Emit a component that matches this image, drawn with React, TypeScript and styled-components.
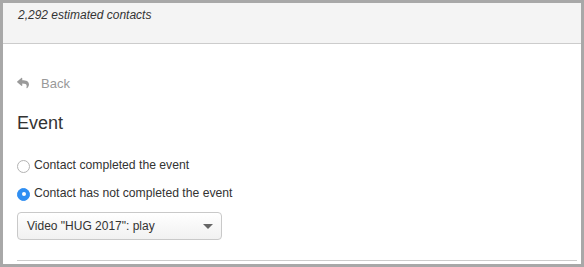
import styled, { createGlobalStyle } from "styled-components";
import { FaReply } from "react-icons/fa";

const GlobalStyle = createGlobalStyle`
  html, body {
    margin: 0;
    padding: 0;
    background: #fff;
  }
  body {
    font-family: "Liberation Sans", Arial, sans-serif;
    color: #333;
  }
`;

const Frame = styled.div`
  width: 584px;
  height: 267px;
  box-sizing: border-box;
  border: 3px solid #a8a8a8;
  background: #fff;
  overflow: hidden;
`;

const Header = styled.div`
  height: 41px;
  box-sizing: border-box;
  padding: 4px 15px 0;
  background: #f4f4f4;
  border-bottom: 1px solid #cccccc;
  font-size: 12px;
  line-height: 16px;
  font-style: italic;
  color: #333;
`;

const Body = styled.div`
  padding: 31px 4px 0 14px;
  display: flex;
  flex-direction: column;
`;

const BackLink = styled.a`
  display: flex;
  align-items: center;
  gap: 12px;
  height: 18px;
  font-size: 13px;
  line-height: 18px;
  color: #999;
  text-decoration: none;
  cursor: pointer;

  svg {
    margin-top: -3px;
  }
`;

const Title = styled.h2`
  margin: 19px 0 0;
  font-size: 18px;
  line-height: 22px;
  font-weight: normal;
  color: #333;
`;

const Options = styled.div`
  margin-top: 22px;
  display: flex;
  flex-direction: column;
  gap: 10px;
`;

const Option = styled.label`
  display: flex;
  align-items: center;
  gap: 4px;
  font-size: 12.2px;
  line-height: 18px;
  color: #333;
  cursor: pointer;
`;

const Radio = styled.span<{ $checked?: boolean }>`
  width: 13px;
  height: 13px;
  margin-top: 2px;
  box-sizing: border-box;
  border-radius: 50%;
  border: 1px solid ${(p) => (p.$checked ? "#2f8ef2" : "#b3b3b3")};
  background: ${(p) => (p.$checked ? "#2f8ef2" : "#fff")};
  display: flex;
  align-items: center;
  justify-content: center;

  &::after {
    content: "";
    display: ${(p) => (p.$checked ? "block" : "none")};
    width: 4px;
    height: 4px;
    border-radius: 50%;
    background: #fff;
  }
`;

const Select = styled.div`
  margin-top: 10px;
  width: 205px;
  height: 28px;
  box-sizing: border-box;
  padding: 0 8px 0 9px;
  display: flex;
  align-items: center;
  justify-content: space-between;
  border: 1px solid #c9c9c9;
  border-radius: 4px;
  background: linear-gradient(#ffffff, #f1f1f1);
  font-size: 12px;
  color: #333;
`;

const Caret = styled.span`
  width: 0;
  height: 0;
  border-left: 5px solid transparent;
  border-right: 5px solid transparent;
  border-top: 5px solid #666;
`;

const Divider = styled.div`
  margin-top: 20px;
  height: 1px;
  background: #cccccc;
`;

export default function App() {
  return (
    <>
      <GlobalStyle />
      <Frame>
        <Header>2,292 estimated contacts</Header>
        <Body>
          <BackLink>
            <FaReply size={12} color="#9a9a9a" />
            Back
          </BackLink>
          <Title>Event</Title>
          <Options>
            <Option>
              <Radio />
              Contact completed the event
            </Option>
            <Option>
              <Radio $checked />
              Contact has not completed the event
            </Option>
          </Options>
          <Select>
            <span>Video "HUG 2017": play</span>
            <Caret />
          </Select>
          <Divider />
        </Body>
      </Frame>
    </>
  );
}
